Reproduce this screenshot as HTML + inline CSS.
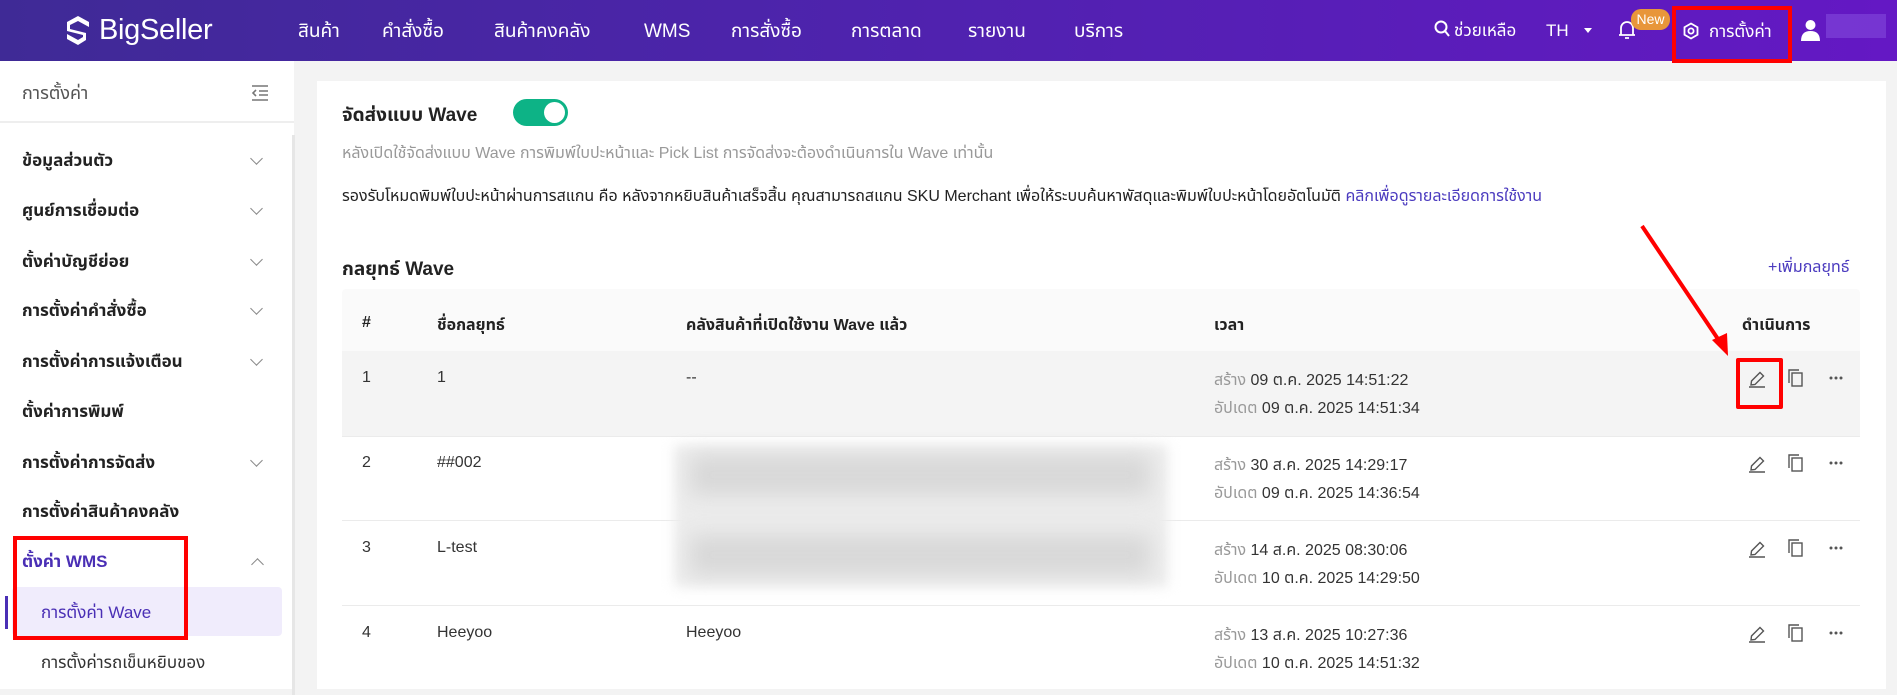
<!DOCTYPE html>
<html><head><meta charset="utf-8">
<style>
*{margin:0;padding:0;box-sizing:border-box}
body{width:1897px;height:689px;overflow:hidden;background:#f3f3f3;font-family:"Liberation Sans","Noto Sans Thai","Tahoma",sans-serif;color:#222;position:relative}
.a{position:absolute;white-space:nowrap}
#hdr{position:absolute;left:0;top:0;width:1897px;height:61px;background:linear-gradient(90deg,#3f2a96 0%,#4e23ad 45%,#6418c4 100%)}
.nav{color:#fff;font-size:19px;top:17px}
#side{position:absolute;left:0;top:61px;width:294px;height:628px;background:#fff}
.mi{font-size:17px;font-weight:bold;color:#222;left:22px}
.chev{left:252px;width:9px;height:9px;border-right:1.5px solid #888;border-bottom:1.5px solid #888;transform:rotate(45deg)}
#card{position:absolute;left:317px;top:81px;width:1569px;height:608px;background:#fff}
.th{font-size:16px;font-weight:bold;color:#222;top:314px}
.td{font-size:16px;color:#333}
.g{color:#999}
.line{position:absolute;left:342px;width:1518px;height:1px;background:#ebebeb}
</style></head><body>
<div id="hdr">
  <svg class="a" style="left:64px;top:14px" width="28" height="33" viewBox="0 0 28 33"><path d="M14 2 L25 8 L25 13 L14 7 L6 11 L6 15 L22 19 L22 26 L14 31 L3 25 L3 20 L14 26 L19 23 L19 21 L3 17 L3 8 Z" fill="#fff"/></svg>
  <div class="a" style="left:99px;top:14px;color:#fff;font-size:29px;letter-spacing:-0.3px">BigSeller</div>
  <div class="a nav" style="left:298px">สินค้า</div>
  <div class="a nav" style="left:382px">คำสั่งซื้อ</div>
  <div class="a nav" style="left:494px">สินค้าคงคลัง</div>
  <div class="a nav" style="left:644px;top:21px">WMS</div>
  <div class="a nav" style="left:731px">การสั่งซื้อ</div>
  <div class="a nav" style="left:851px">การตลาด</div>
  <div class="a nav" style="left:968px">รายงาน</div>
  <div class="a nav" style="left:1074px">บริการ</div>
  <svg class="a" style="left:1434px;top:20px" width="17" height="18" viewBox="0 0 17 18"><circle cx="7" cy="7" r="5.5" stroke="#fff" stroke-width="2" fill="none"/><path d="M11 11 L15 16" stroke="#fff" stroke-width="2"/></svg>
  <div class="a" style="left:1454px;top:18px;color:#fff;font-size:17px">ช่วยเหลือ</div>
  <div class="a" style="left:1546px;top:21px;color:#fff;font-size:17px">TH</div>
  <div class="a" style="left:1584px;top:28px;width:0;height:0;border-left:4px solid transparent;border-right:4px solid transparent;border-top:5px solid #fff"></div>
  <svg class="a" style="left:1618px;top:20px" width="18" height="20" viewBox="0 0 18 20"><path d="M3 15 L3 8 A6 6 0 0 1 15 8 L15 15 Z M1 15 L17 15 M7 18 L11 18" stroke="#fff" stroke-width="1.8" fill="none"/></svg>
  <div class="a" style="left:1631px;top:9px;width:39px;height:21px;background:#e8963a;border-radius:10px;color:#fff;font-size:14px;text-align:center;line-height:20px">New</div>
  <div class="a" style="left:1672px;top:6px;width:120px;height:57px;border:4px solid #f00"></div>
  <svg class="a" style="left:1682px;top:22px" width="18" height="18" viewBox="0 0 18 18"><path d="M9 1.5 L15.5 5.25 L15.5 12.75 L9 16.5 L2.5 12.75 L2.5 5.25 Z" stroke="#fff" stroke-width="1.8" fill="none"/><circle cx="9" cy="9" r="2.6" stroke="#fff" stroke-width="1.8" fill="none"/></svg>
  <div class="a" style="left:1709px;top:19px;color:#fff;font-size:17px">การตั้งค่า</div>
  <svg class="a" style="left:1800px;top:19px" width="21" height="22" viewBox="0 0 21 22"><circle cx="10.5" cy="6" r="5" fill="#fff"/><path d="M1 22 Q1 12 10.5 12 Q20 12 20 22 Z" fill="#fff"/></svg>
  <div class="a" style="left:1826px;top:14px;width:60px;height:24px;background:#7a3dd6;opacity:.8"></div>
</div>

<div id="side">
  <div class="a" style="left:22px;top:20px;font-size:18px;color:#555">การตั้งค่า</div>
  <svg class="a" style="left:251px;top:24px" width="18" height="16" viewBox="0 0 18 16"><path d="M1 1 H17 M8 6 H17 M8 10 H17 M1 15 H17 M5 5 L2 8 L5 11" stroke="#777" stroke-width="1.6" fill="none"/></svg>
  <div class="a" style="left:0;top:60px;width:294px;height:2px;background:#eee"></div>
  <div class="a" style="left:292px;top:74px;width:3px;height:560px;background:#e6e6e6"></div>
  <div class="a mi" style="top:87px">ข้อมูลส่วนตัว</div><div class="a chev" style="top:93px"></div>
  <div class="a mi" style="top:137px">ศูนย์การเชื่อมต่อ</div><div class="a chev" style="top:143px"></div>
  <div class="a mi" style="top:188px">ตั้งค่าบัญชีย่อย</div><div class="a chev" style="top:194px"></div>
  <div class="a mi" style="top:237px">การตั้งค่าคำสั่งซื้อ</div><div class="a chev" style="top:243px"></div>
  <div class="a mi" style="top:288px">การตั้งค่าการแจ้งเตือน</div><div class="a chev" style="top:294px"></div>
  <div class="a mi" style="top:338px">ตั้งค่าการพิมพ์</div>
  <div class="a mi" style="top:389px">การตั้งค่าการจัดส่ง</div><div class="a chev" style="top:395px"></div>
  <div class="a mi" style="top:438px">การตั้งค่าสินค้าคงคลัง</div>
  <div class="a mi" style="top:488px;color:#4a2fb5">ตั้งค่า WMS</div>
  <div class="a" style="left:253px;top:499px;width:9px;height:9px;border-left:1.5px solid #888;border-top:1.5px solid #888;transform:rotate(45deg)"></div>
  <div class="a" style="left:12px;top:526px;width:270px;height:49px;background:#f0ecfc;border-radius:4px"></div>
  <div class="a" style="left:5px;top:535px;width:3px;height:33px;background:#4a2fb5"></div>
  <div class="a" style="left:41px;top:539px;font-size:17px;color:#4a2fb5">การตั้งค่า Wave</div>
  <div class="a" style="left:13px;top:475px;width:175px;height:104px;border:4px solid #f00"></div>
  <div class="a" style="left:41px;top:589px;font-size:17px;color:#333">การตั้งค่ารถเข็นหยิบของ</div>
</div>

<div id="card"></div>
<div class="a" style="left:342px;top:101px;font-size:19px;font-weight:bold">จัดส่งแบบ Wave</div>
<div class="a" style="left:513px;top:99px;width:55px;height:27px;background:#0db386;border-radius:14px"></div>
<div class="a" style="left:544px;top:102px;width:21px;height:21px;background:#fff;border-radius:50%"></div>
<div class="a" style="left:342px;top:142px;font-size:16px;color:#999">หลังเปิดใช้จัดส่งแบบ Wave การพิมพ์ใบปะหน้าและ Pick List การจัดส่งจะต้องดำเนินการใน Wave เท่านั้น</div>
<div class="a" style="left:342px;top:185px;font-size:16px;color:#222">รองรับโหมดพิมพ์ใบปะหน้าผ่านการสแกน คือ หลังจากหยิบสินค้าเสร็จสิ้น คุณสามารถสแกน SKU Merchant เพื่อให้ระบบค้นหาพัสดุและพิมพ์ใบปะหน้าโดยอัตโนมัติ <span style="color:#4b3bbf">คลิกเพื่อดูรายละเอียดการใช้งาน</span></div>
<div class="a" style="left:342px;top:255px;font-size:19px;font-weight:bold">กลยุทธ์ Wave</div>
<div class="a" style="left:1768px;top:256px;font-size:16px;color:#4b3bbf">+เพิ่มกลยุทธ์</div>

<div class="a" style="left:342px;top:289px;width:1518px;height:62px;background:#fafafa;border-radius:4px 4px 0 0"></div>
<div class="a th" style="left:362px">#</div>
<div class="a th" style="left:437px">ชื่อกลยุทธ์</div>
<div class="a th" style="left:686px">คลังสินค้าที่เปิดใช้งาน Wave แล้ว</div>
<div class="a th" style="left:1214px">เวลา</div>
<div class="a th" style="left:1742px">ดำเนินการ</div>

<div class="a" style="left:342px;top:351px;width:1518px;height:85px;background:#f4f4f4"></div>
<div class="line" style="top:436px"></div>
<div class="line" style="top:520px"></div>
<div class="line" style="top:605px"></div>

<div class="a" style="left:674px;top:445px;width:494px;height:142px;background:#ececec;filter:blur(6px)"></div>
<div class="a" style="left:690px;top:455px;width:460px;height:40px;background:#d8d8d8;filter:blur(10px)"></div>
<div class="a" style="left:690px;top:535px;width:460px;height:40px;background:#d8d8d8;filter:blur(10px)"></div>

<div class="a td" style="left:362px;top:369px">1</div><div class="a td" style="left:437px;top:369px">1</div><div class="a td" style="left:686px;top:369px">--</div>
<div class="a td" style="left:1214px;top:369px"><span class="g">สร้าง</span> 09 ต.ค. 2025 14:51:22</div>
<div class="a td" style="left:1214px;top:397px"><span class="g">อัปเดต</span> 09 ต.ค. 2025 14:51:34</div>

<div class="a td" style="left:362px;top:454px">2</div><div class="a td" style="left:437px;top:454px">##002</div>
<div class="a td" style="left:1214px;top:454px"><span class="g">สร้าง</span> 30 ส.ค. 2025 14:29:17</div>
<div class="a td" style="left:1214px;top:482px"><span class="g">อัปเดต</span> 09 ต.ค. 2025 14:36:54</div>

<div class="a td" style="left:362px;top:539px">3</div><div class="a td" style="left:437px;top:539px">L-test</div>
<div class="a td" style="left:1214px;top:539px"><span class="g">สร้าง</span> 14 ส.ค. 2025 08:30:06</div>
<div class="a td" style="left:1214px;top:567px"><span class="g">อัปเดต</span> 10 ต.ค. 2025 14:29:50</div>

<div class="a td" style="left:362px;top:624px">4</div><div class="a td" style="left:437px;top:624px">Heeyoo</div><div class="a td" style="left:686px;top:624px">Heeyoo</div>
<div class="a td" style="left:1214px;top:624px"><span class="g">สร้าง</span> 13 ส.ค. 2025 10:27:36</div>
<div class="a td" style="left:1214px;top:652px"><span class="g">อัปเดต</span> 10 ต.ค. 2025 14:51:32</div>

<svg class="a" style="left:1748px;top:368px" width="110" height="280" viewBox="0 0 110 280">
  <defs>
    <g id="ic">
      <path d="M3 17 L3.5 13 L12 4.5 L15.5 8 L7 16.5 Z M1 19 H17" stroke="#555" stroke-width="1.4" fill="none"/>
      <rect x="44" y="5" width="10" height="13" stroke="#555" stroke-width="1.4" fill="none"/>
      <path d="M41 15 V2 H51" stroke="#555" stroke-width="1.4" fill="none"/>
      <circle cx="83" cy="10" r="1.5" fill="#555"/><circle cx="88" cy="10" r="1.5" fill="#555"/><circle cx="93" cy="10" r="1.5" fill="#555"/>
    </g>
  </defs>
  <use href="#ic" y="0"/><use href="#ic" y="85"/><use href="#ic" y="170"/><use href="#ic" y="255"/>
</svg>
<div class="a" style="left:1736px;top:358px;width:47px;height:51px;border:4px solid #f00;border-radius:2px"></div>
<svg class="a" style="left:0;top:0" width="1897" height="689"><path d="M1642 226 L1722 345" stroke="#f00" stroke-width="4"/><path d="M1728 356 L1712 340 L1727 333 Z" fill="#f00"/></svg>
</body></html>
